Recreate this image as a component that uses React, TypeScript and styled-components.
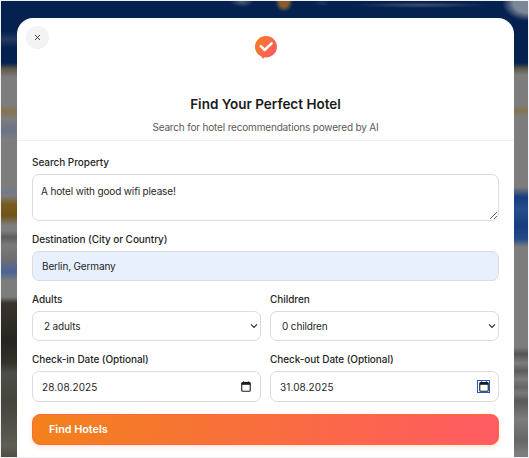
import React from "react";
import styled, { createGlobalStyle } from "styled-components";

const Global = createGlobalStyle`
  html, body { margin: 0; padding: 0; background: #fff; }
  * { box-sizing: border-box; }
  #root { width: 529px; height: 458px; overflow: hidden; }
`;

const leftStrip = `linear-gradient(180deg,
  #04214f 0, #04214f 30px, #26385f 38px, #04214f 47px, #04214f 62px, #5f5a48 68px, #7d7d7d 76px,
  #7d7d7d 104px, #85734f 110px, #7d7d7d 118px, #6b7388 129px, #7d7d7d 138px, #7d7d7d 186px,
  #727a8c 191px, #7d7d7d 195px, #7a5c20 203px, #6f5418 215px, #7d7d7d 224px, #7d7d7d 230px,
  #5d5d5d 236px, #7a7a7a 244px, #6e6e6e 258px, #4a6498 271px, #7d7d7d 280px, #7d7d7d 296px,
  #38352e 302px, #27251f 340px, #35322c 362px, #4d4d47 372px, #45453e 400px, #4f4f48 420px, #5e5e52 445px, #4a4a42 458px)`;

const rightStrip = `linear-gradient(180deg,
  #04214f 0, #04214f 62px, #5f5a48 68px, #7d7d7d 74px, #7d7d7d 104px,
  #85734f 110px, #7d7d7d 116px, #7d7d7d 186px, #143d80 196px, #264d8a 208px, #153c7f 225px,
  #244a88 238px, #7d7d7d 246px, #7d7d7d 346px, #555 353px, #7d7d7d 362px, #5c5c5c 370px,
  #7d7d7d 378px, #666 386px, #7a7a7a 392px, #585858 400px, #7d7d7d 418px, #666 440px, #7d7d7d 452px)`;

const Page = styled.main`
  width: 529px;
  height: 458px;
  border: 1px solid #eef0f4;
  padding: 17px 14px 0 16px;
  display: flex;
  overflow: hidden;
  background:
    radial-gradient(ellipse 26px 18px at 527px 2px, #7e8797 55%, transparent),
    radial-gradient(ellipse 12px 5px at 241px 1px, #4d5b78, transparent),
    radial-gradient(ellipse 9px 10px at 283px 1px, #a94f26, #7a5f34 50%, transparent),
    radial-gradient(ellipse 8px 4px at 321px 2px, #1d3763, transparent),
    radial-gradient(ellipse 68px 3px at 420px 4px, #3e4e6e, transparent),
    ${leftStrip} left top / 16px 100% no-repeat,
    ${rightStrip} right top / 14px 100% no-repeat,
    #04214f;
`;

const Modal = styled.section`
  position: relative;
  flex: 1;
  background: #fff;
  border-radius: 16px 16px 0 0;
  display: flex;
  flex-direction: column;
  font-family: Inter, "Liberation Sans", sans-serif;
`;

const CloseButton = styled.button`
  position: absolute;
  top: 8px;
  left: 9px;
  width: 23px;
  height: 23px;
  padding: 0;
  border: 0;
  border-radius: 50%;
  background: #f3f3f3;
  display: flex;
  align-items: center;
  justify-content: center;
  color: #2a2a2a;
`;

const Header = styled.header`
  height: 123px;
  padding-top: 17px;
  border-bottom: 1px solid #f0f0f0;
  display: flex;
  flex-direction: column;
  align-items: center;
`;

const Logo = styled.svg`
  width: 24px;
  height: 24px;
  display: block;
`;

const Title = styled.h1`
  margin: 34px 0 0;
  font-size: 13.5px;
  line-height: 22px;
  font-weight: 600;
  color: #1a1a1a;
`;

const Subtitle = styled.p`
  margin: 4px 0 0;
  font-size: 10px;
  letter-spacing: -0.17px;
  line-height: 16px;
  color: #5a5a5a;
`;

const Form = styled.form`
  padding: 15px 15px 0;
  display: flex;
  flex-direction: column;
  gap: 12px;
`;

const Row = styled.div`
  display: grid;
  grid-template-columns: 229px 229px;
  column-gap: 9px;
`;

const Field = styled.div`
  display: flex;
  flex-direction: column;
  gap: 5px;
  min-width: 0;
`;

const Label = styled.label`
  font-size: 10px;
  letter-spacing: -0.06px;
  line-height: 13px;
  font-weight: 500;
  color: #262626;
`;

const controlBase = `
  width: 100%;
  border: 1px solid #dcdcdc;
  border-radius: 7px;
  font-family: Inter, "Liberation Sans", sans-serif;
  font-size: 10px;
  letter-spacing: -0.15px;
  color: #1f1f1f;
  outline: none;
`;

const TextArea = styled.textarea`
  ${controlBase}
  display: block;
  height: 47px;
  padding: 9px 8px;
  line-height: 15px;
  resize: vertical;
  background: #fff;
`;

const TextInput = styled.input<{ $filled?: boolean; $date?: boolean }>`
  ${controlBase}
  display: block;
  height: ${(p) => (p.$date ? "31px" : "30px")};
  padding: 0 9px;
  ${(p) => (p.$date ? "letter-spacing: 0.1px;" : "")}
  background: ${(p) => (p.$filled ? "#e8f0fe" : "#fff")};
`;

const ControlWrap = styled.div`
  position: relative;
`;

const Select = styled.select`
  ${controlBase}
  display: block;
  height: 30px;
  padding: 0 24px 0 11px;
  appearance: none;
  background: #fff;
`;

const Chevron = styled.svg`
  position: absolute;
  right: 3px;
  top: 12px;
  width: 8px;
  height: 6px;
  pointer-events: none;
`;

const CalendarBox = styled.span<{ $focused?: boolean }>`
  position: absolute;
  right: 9px;
  top: 9px;
  width: 13px;
  height: 13px;
  display: flex;
  align-items: center;
  justify-content: center;
  border: ${(p) => (p.$focused ? "1.5px solid #1a56d6" : "0")};
`;

const Submit = styled.button`
  height: 31px;
  width: 100%;
  padding: 0 16px;
  border: 1px solid #fa6a3a;
  border-radius: 8px;
  background: linear-gradient(100deg, #f3811b 0%, #ff5a63 100%);
  box-shadow: 0 2px 5px rgba(240, 120, 60, 0.22);
  color: #fff;
  font-family: Inter, "Liberation Sans", sans-serif;
  font-size: 10.8px;
  font-weight: 600;
  text-align: left;
`;

const Calendar = () => (
  <svg width="10" height="11" viewBox="0 0 10 11" aria-hidden="true">
    <rect x="0.75" y="1.6" width="8.5" height="8.7" rx="1" fill="none" stroke="#1b1b1b" strokeWidth="1.1" />
    <rect x="0.75" y="1.6" width="8.5" height="2.2" fill="#1b1b1b" />
    <rect x="2.2" y="0.3" width="1" height="1.6" fill="#1b1b1b" />
    <rect x="6.8" y="0.3" width="1" height="1.6" fill="#1b1b1b" />
  </svg>
);

const ChevronIcon = () => (
  <Chevron viewBox="0 0 8 6" aria-hidden="true">
    <path d="M1 1.4 4 4.4 7 1.4" fill="none" stroke="#2a2a2a" strokeWidth="1.1" />
  </Chevron>
);

export default function App() {
  return (
    <>
      <Global />
      <Page>
        <Modal>
          <CloseButton type="button" aria-label="Close">
            <svg width="7" height="7" viewBox="0 0 7 7" aria-hidden="true">
              <path d="M1 1 6 6M6 1 1 6" stroke="currentColor" strokeWidth="0.9" />
            </svg>
          </CloseButton>
          <Header>
            <Logo viewBox="0 0 24 24" aria-hidden="true">
              <defs>
                <linearGradient id="logoFill" x1="0" y1="0" x2="1" y2="0.6">
                  <stop offset="0" stopColor="#f3811b" />
                  <stop offset="1" stopColor="#ff5a63" />
                </linearGradient>
              </defs>
              <path
                d="M12 1C18.1 1 23 5.8 23 11.7 23 17.6 18.1 22.4 12 22.4 11.4 22.4 10.8 22.3 10.2 22.2L9 24 7.2 21.3C3.5 19.6 1 15.9 1 11.7 1 5.8 5.9 1 12 1Z"
                fill="url(#logoFill)"
              />
              <path d="M6.8 11.2 10.6 15 17.6 8.4" fill="none" stroke="#fff" strokeWidth="2.6" strokeLinecap="round" strokeLinejoin="round" />
            </Logo>
            <Title>Find Your Perfect Hotel</Title>
            <Subtitle>Search for hotel recommendations powered by AI</Subtitle>
          </Header>
          <Form>
            <Field>
              <Label htmlFor="q">Search Property</Label>
              <TextArea id="q" defaultValue="A hotel with good wifi please!" />
            </Field>
            <Field>
              <Label htmlFor="dest">Destination (City or Country)</Label>
              <TextInput id="dest" $filled defaultValue="Berlin, Germany" />
            </Field>
            <Row>
              <Field>
                <Label htmlFor="adults">Adults</Label>
                <ControlWrap>
                  <Select id="adults" defaultValue="2 adults">
                    <option>1 adult</option>
                    <option>2 adults</option>
                    <option>3 adults</option>
                  </Select>
                  <ChevronIcon />
                </ControlWrap>
              </Field>
              <Field>
                <Label htmlFor="children">Children</Label>
                <ControlWrap>
                  <Select id="children" defaultValue="0 children">
                    <option>0 children</option>
                    <option>1 child</option>
                    <option>2 children</option>
                  </Select>
                  <ChevronIcon />
                </ControlWrap>
              </Field>
            </Row>
            <Row>
              <Field>
                <Label htmlFor="in">Check-in Date (Optional)</Label>
                <ControlWrap>
                  <TextInput id="in" $date defaultValue="28.08.2025" />
                  <CalendarBox><Calendar /></CalendarBox>
                </ControlWrap>
              </Field>
              <Field>
                <Label htmlFor="out">Check-out Date (Optional)</Label>
                <ControlWrap>
                  <TextInput id="out" $date defaultValue="31.08.2025" />
                  <CalendarBox $focused><Calendar /></CalendarBox>
                </ControlWrap>
              </Field>
            </Row>
            <Submit type="button">Find Hotels</Submit>
          </Form>
        </Modal>
      </Page>
    </>
  );
}
